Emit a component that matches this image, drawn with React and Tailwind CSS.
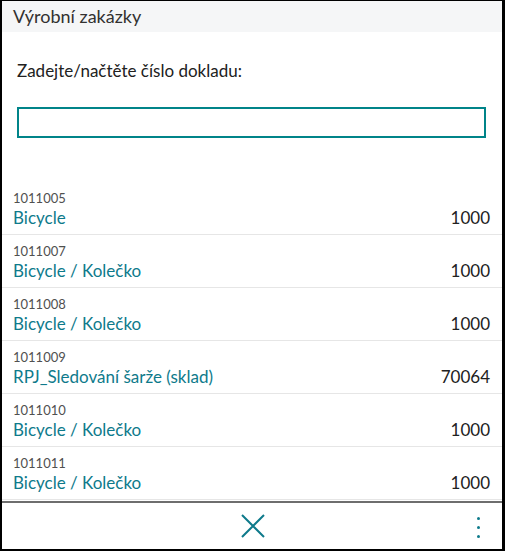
import React from 'react';

const orders = [
  { id: '1011005', name: 'Bicycle', qty: '1000' },
  { id: '1011007', name: 'Bicycle / Kolečko', qty: '1000' },
  { id: '1011008', name: 'Bicycle / Kolečko', qty: '1000' },
  { id: '1011009', name: 'RPJ_Sledování šarže (sklad)', qty: '70064' },
  { id: '1011010', name: 'Bicycle / Kolečko', qty: '1000' },
  { id: '1011011', name: 'Bicycle / Kolečko', qty: '1000' },
];

const App = () => {
  return (
    <div
      className="w-[505px] h-[551px] bg-white border-t border-l-2 border-r-[3px] border-b-2 border-black flex flex-col overflow-hidden"
      style={{ fontFamily: 'Lato, "Open Sans", sans-serif' }}
    >
      <div className="h-[31px] bg-[#f5f6f7] flex items-center pl-[11px] text-[18px] text-[#323130]">
        Výrobní zakázky
      </div>

      <div className="pl-[15px] pr-[16px] pt-[27px]">
        <div className="text-[17px] text-[#212121] leading-[24px]">Zadejte/načtěte číslo dokladu:</div>
        <input
          type="text"
          className="mt-[24px] w-full h-[31px] border-2 border-[#008489] outline-none px-2"
        />
      </div>

      <div className="mt-[44px] flex-1 flex flex-col">
        {orders.map((o) => (
          <div key={o.id} className="h-[53px] shrink-0 border-b border-[#e6e6e6] pl-[11px] pr-[12px] flex items-end justify-between pb-[5px]">
            <div className="flex flex-col">
              <span className="text-[13px] leading-[17px] text-[#505050]">{o.id}</span>
              <span className="text-[17px] leading-[22px] text-[#0e7a8b]">{o.name}</span>
            </div>
            <span className="text-[17px] leading-[22px] text-[#212121]">{o.qty}</span>
          </div>
        ))}
      </div>

      <div className="h-[48px] border-t-2 border-[#6e6e6e] flex items-center relative">
        <div className="flex-1 flex justify-center">
          <svg width="24" height="24" viewBox="0 0 24 24" className="ml-[2px]">
            <path d="M1 1 L23 23 M23 1 L1 23" stroke="#0e7a8b" strokeWidth="2" fill="none" />
          </svg>
        </div>
        <div className="absolute right-[22px] top-[14px] flex flex-col gap-[6px]">
          <span className="w-[3px] h-[3px] rounded-full bg-[#0e7a8b]" />
          <span className="w-[3px] h-[3px] rounded-full bg-[#0e7a8b]" />
          <span className="w-[3px] h-[3px] rounded-full bg-[#0e7a8b]" />
        </div>
      </div>
    </div>
  );
};

export default App;
